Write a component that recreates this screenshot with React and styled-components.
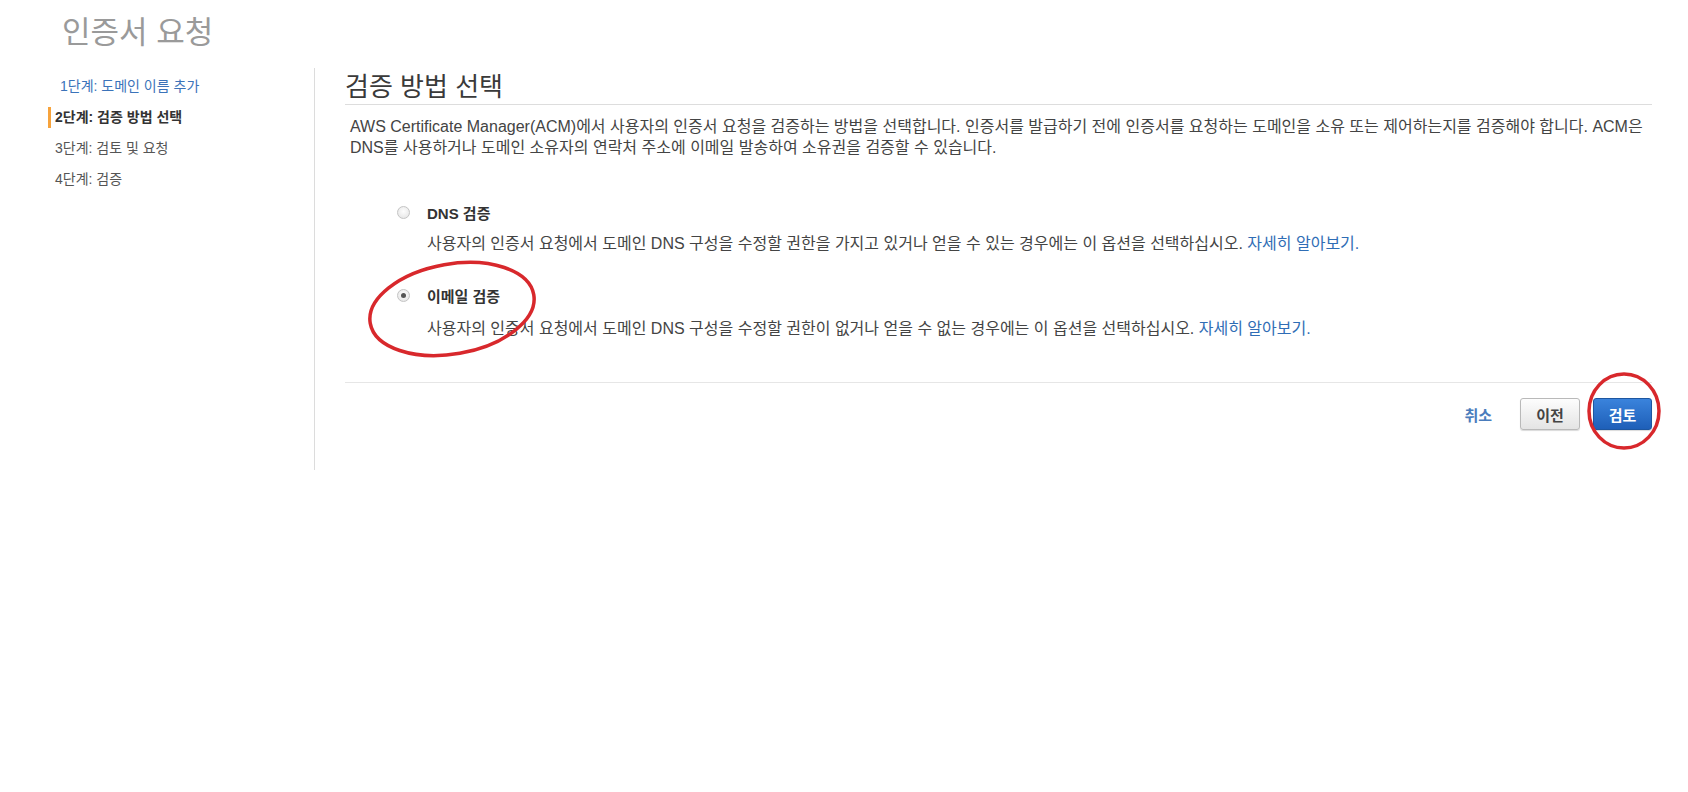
import React from "react"
import styled, { createGlobalStyle } from "styled-components"

const GlobalStyle = createGlobalStyle`
body {
  margin: 0;
  background: #fff;
  font-family: "Liberation Sans", Arial, "Noto Sans CJK KR", sans-serif;
  color: #444;
}
`

const Page = styled.div`
position: relative;
height: 792px;
overflow: hidden;
`

const Title = styled.h1`
margin: 15px 0 0 62px;
font-size: 31px;
line-height: 36px;
font-weight: normal;
color: #9a9a9a;
`

const Body = styled.div`
display: flex;
margin-top: 17px;
padding-right: 36px;
`

const Sidebar = styled.nav`
box-sizing: border-box;
width: 315px;
min-height: 402px;
padding-top: 3px;
border-right: 1px solid #dcdcdc;
`

const Step = styled.div`
display: flex;
align-items: center;
height: 31px;
padding-left: ${p => (p.$active ? 48 : p.$done ? 60 : 55)}px;
font-size: 14px;
`

const StepLabel = styled.span`
line-height: 21px;
color: ${p => (p.$done ? "#3b73b9" : p.$active ? "#333" : "#555")};
font-weight: ${p => (p.$active ? "bold" : "normal")};
border-left: ${p => (p.$active ? "3px solid #f7a33c" : "none")};
padding-left: ${p => (p.$active ? 4 : 0)}px;
`

const Content = styled.main`
flex: 1;
padding-left: 30px;
`

const Heading = styled.h2`
margin: 0;
padding: 3px 0 1px;
font-size: 26px;
line-height: 32px;
font-weight: normal;
color: #3a3a3a;
border-bottom: 1px solid #dddddd;
`

const Intro = styled.p`
margin: 11px 0 0;
padding: 0 5px;
font-size: 16px;
line-height: 21px;
color: #444;
`

const Options = styled.div`
margin: 44px 0 0 52px;
`

const Option = styled.div`
& + & {
  margin-top: 31px;
}
`

const OptionHead = styled.label`
display: flex;
align-items: center;
height: 20px;
font-size: 15px;
font-weight: bold;
color: #333;
`

const Radio = styled.span`
box-sizing: border-box;
width: 13px;
height: 13px;
margin-right: 17px;
border-radius: 50%;
border: 1px solid #c4c4c4;
background: radial-gradient(circle at 50% 40%, #fdfdfd, #e2e2e2);
display: flex;
align-items: center;
justify-content: center;
&::after {
  content: "";
  width: 5px;
  height: 5px;
  border-radius: 50%;
  background: ${p => (p.$checked ? "#555" : "transparent")};
}
`

const OptionText = styled.p`
margin: ${p => (p.$wide ? 13 : 11)}px 0 0 30px;
font-size: 16px;
line-height: 21px;
color: #444;
`

const Link = styled.a`
color: #2f6db5;
text-decoration: none;
`

const Footer = styled.div`
display: flex;
justify-content: flex-end;
align-items: center;
margin-top: 43px;
padding-top: 15px;
border-top: 1px solid #e6e6e6;
`

const Cancel = styled.a`
margin-right: 28px;
font-size: 15px;
font-weight: bold;
color: #4a7cbc;
`

const Button = styled.button`
box-sizing: border-box;
width: ${p => (p.$primary ? 59 : 60)}px;
height: 32px;
margin-left: ${p => (p.$primary ? 13 : 0)}px;
border-radius: 3px;
border: 1px solid ${p => (p.$primary ? "#1d56a0" : "#b9b9b9")};
background: ${p =>
  p.$primary
    ? "linear-gradient(#3a83dc, #1e5fb8)"
    : "linear-gradient(#fdfdfd, #e4e4e4)"};
color: ${p => (p.$primary ? "#fff" : "#444")};
font-family: inherit;
font-size: 15px;
font-weight: bold;
cursor: pointer;
box-shadow: 0 1px 1px rgba(0, 0, 0, 0.15);
`

const Marks = styled.svg`
position: absolute;
left: 0;
top: 0;
pointer-events: none;
`

function App() {
  return (
    <Page>
      <GlobalStyle />
      <Title>인증서 요청</Title>
      <Body>
        <Sidebar>
          <Step $done><StepLabel $done>1단계: 도메인 이름 추가</StepLabel></Step>
          <Step $active><StepLabel $active>2단계: 검증 방법 선택</StepLabel></Step>
          <Step><StepLabel>3단계: 검토 및 요청</StepLabel></Step>
          <Step><StepLabel>4단계: 검증</StepLabel></Step>
        </Sidebar>
        <Content>
          <Heading>검증 방법 선택</Heading>
          <Intro>
            AWS Certificate Manager(ACM)에서 사용자의 인증서 요청을 검증하는 방법을 선택합니다. 인증서를 발급하기 전에 인증서를 요청하는 도메인을 소유 또는 제어하는지를 검증해야 합니다. ACM은 DNS를 사용하거나 도메인 소유자의 연락처 주소에 이메일 발송하여 소유권을 검증할 수 있습니다.
          </Intro>
          <Options>
            <Option>
              <OptionHead><Radio />DNS 검증</OptionHead>
              <OptionText>
                사용자의 인증서 요청에서 도메인 DNS 구성을 수정할 권한을 가지고 있거나 얻을 수 있는 경우에는 이 옵션을 선택하십시오. <Link href="#">자세히 알아보기.</Link>
              </OptionText>
            </Option>
            <Option>
              <OptionHead><Radio $checked />이메일 검증</OptionHead>
              <OptionText $wide>
                사용자의 인증서 요청에서 도메인 DNS 구성을 수정할 권한이 없거나 얻을 수 없는 경우에는 이 옵션을 선택하십시오. <Link href="#">자세히 알아보기.</Link>
              </OptionText>
            </Option>
          </Options>
          <Footer>
            <Cancel>취소</Cancel>
            <Button>이전</Button>
            <Button $primary>검토</Button>
          </Footer>
        </Content>
      </Body>
      <Marks width="1688" height="792" viewBox="0 0 1688 792">
        <ellipse cx="452" cy="309" rx="83" ry="45" transform="rotate(-10 452 309)" fill="none" stroke="#d8282c" strokeWidth="3.5" />
        <ellipse cx="1624" cy="411" rx="35" ry="37" fill="none" stroke="#d8282c" strokeWidth="3.5" />
      </Marks>
    </Page>
  )
}

export default App
